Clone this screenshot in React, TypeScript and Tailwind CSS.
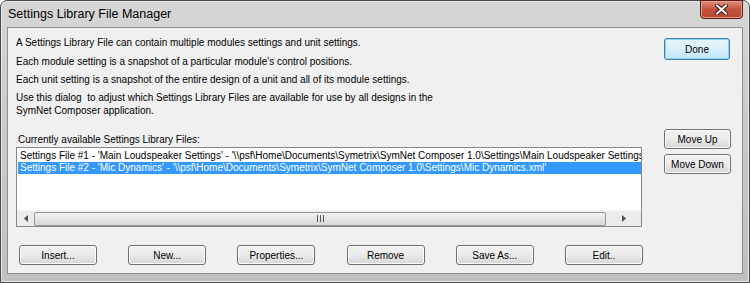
import type { ReactNode } from "react";

const font = { fontFamily: '"Liberation Sans", Arial, sans-serif' };

function Btn({ children, className = "" }: { children: ReactNode; className?: string }) {
  return (
    <button
      className={`flex items-center justify-center rounded-[3px] border border-[#707070] bg-gradient-to-b from-[#f2f2f2] via-[#ebebeb] to-[#d6d6d6] text-[10px] text-black shadow-[inset_0_0_0_1px_#fcfcfc] ${className}`}
    >
      {children}
    </button>
  );
}

export default function App() {
  const rows = [
    "Settings File #1 - 'Main Loudspeaker Settings' - '\\\\psf\\Home\\Documents\\Symetrix\\SymNet Composer 1.0\\Settings\\Main Loudspeaker Settings.xml'",
    "Settings File #2 - 'Mic Dynamics' - '\\\\psf\\Home\\Documents\\Symetrix\\SymNet Composer 1.0\\Settings\\Mic Dynamics.xml'",
  ];

  return (
    <div style={font} className="w-[750px] h-[283px] bg-white">
      <div className="relative w-[750px] h-[283px] rounded-t-[7px] border border-[#4a4a4a] bg-gradient-to-b from-[#d6d6d6] via-[#c9c9c9] to-[#c0c0c0] shadow-[inset_0_0_0_1px_#e6e6e6]">
        {/* title bar */}
        <div className="h-[26px] flex items-center pl-[7px] text-[12.5px] text-black">
          Settings Library File Manager
        </div>
        <button className="absolute top-[-1px] right-[6px] w-[43px] h-[19px] rounded-b-[4px] border border-[#5a1a12] bg-gradient-to-b from-[#e0917f] via-[#c4503a] to-[#b84530] shadow-[inset_0_0_0_1px_#e6a090] flex items-center justify-center">
          <svg width="13" height="11" viewBox="0 0 13 11">
            <path d="M2 1.5 L11 9.5 M11 1.5 L2 9.5" stroke="#3b1a14" strokeWidth="4" strokeLinecap="square" />
            <path d="M2 1.5 L11 9.5 M11 1.5 L2 9.5" stroke="#ffffff" strokeWidth="2" strokeLinecap="square" />
          </svg>
        </button>

        {/* client area */}
        <div className="mx-[6px] h-[247px] border border-[#8e8f8f] bg-[#f0f0f0] flex text-[10px] text-black leading-[13px]">
          <div className="w-[634px] pl-[8px] flex flex-col">
            <p className="mt-[8px]">A Settings Library File can contain multiple modules settings and unit settings.</p>
            <p className="mt-[6px]">Each module setting is a snapshot of a particular module's control positions.</p>
            <p className="mt-[5px]">Each unit setting is a snapshot of the entire design of a unit and all of its module settings.</p>
            <p className="mt-[5px] w-[430px]">
              Use this dialog&nbsp; to adjust which Settings Library Files are available for use by all designs in the SymNet Composer application.
            </p>
            <p className="mt-[16px] pl-[2px]">Currently available Settings Library Files:</p>

            <div className="mt-[1px] w-[626px] h-[80px] border border-[#828790] bg-white flex flex-col">
              <div className="flex-1 pt-[1px] overflow-hidden">
                <div className="h-[13px] pl-[3px] whitespace-nowrap overflow-hidden leading-[13px]">{rows[0]}</div>
                <div className="h-[12px] ml-[1px] pl-[2px] bg-[#3399ff] text-white whitespace-nowrap overflow-hidden leading-[12px]">{rows[1]}</div>
              </div>
              {/* horizontal scrollbar */}
              <div className="h-[16px] flex items-center bg-[#ececec] border-t border-[#f4f4f4]">
                <div className="w-[17px] h-full flex items-center justify-center">
                  <svg width="4" height="7" viewBox="0 0 4 7">
                    <path d="M4 0 L0 3.5 L4 7 Z" fill="#505050" />
                  </svg>
                </div>
                <div className="w-[572px] h-[14px] rounded-[2px] border border-[#979797] bg-gradient-to-b from-[#f3f3f3] to-[#d8d8d8] flex items-center justify-center">
                  <svg width="7" height="7" viewBox="0 0 7 7">
                    <path d="M0.5 0 V7 M3.5 0 V7 M6.5 0 V7" stroke="#555" strokeWidth="1" />
                  </svg>
                </div>
                <div className="flex-1 h-full flex items-center justify-center">
                  <svg width="4" height="7" viewBox="0 0 4 7">
                    <path d="M0 0 L4 3.5 L0 7 Z" fill="#505050" />
                  </svg>
                </div>
              </div>
            </div>

            <div className="mt-[18px] w-[624px] ml-[3px] flex justify-between">
              <Btn className="w-[78px] h-[20px]">Insert...</Btn>
              <Btn className="w-[78px] h-[20px]">New...</Btn>
              <Btn className="w-[78px] h-[20px]">Properties...</Btn>
              <Btn className="w-[78px] h-[20px]">Remove</Btn>
              <Btn className="w-[78px] h-[20px]">Save As...</Btn>
              <Btn className="w-[78px] h-[20px]">Edit..</Btn>
            </div>
          </div>

          <div className="ml-[22px] flex flex-col">
            <button className="mt-[10px] w-[66px] h-[22px] rounded-[3px] border border-[#3c7fb1] bg-gradient-to-b from-[#eaf6fd] via-[#d9f0fc] to-[#bee6fd] shadow-[inset_0_0_0_1px_#92d3f2] text-[10px] flex items-center justify-center">
              Done
            </button>
            <Btn className="mt-[69px] w-[67px] h-[20px]">Move Up</Btn>
            <Btn className="mt-[5px] w-[67px] h-[20px]">Move Down</Btn>
          </div>
        </div>
      </div>
    </div>
  );
}
